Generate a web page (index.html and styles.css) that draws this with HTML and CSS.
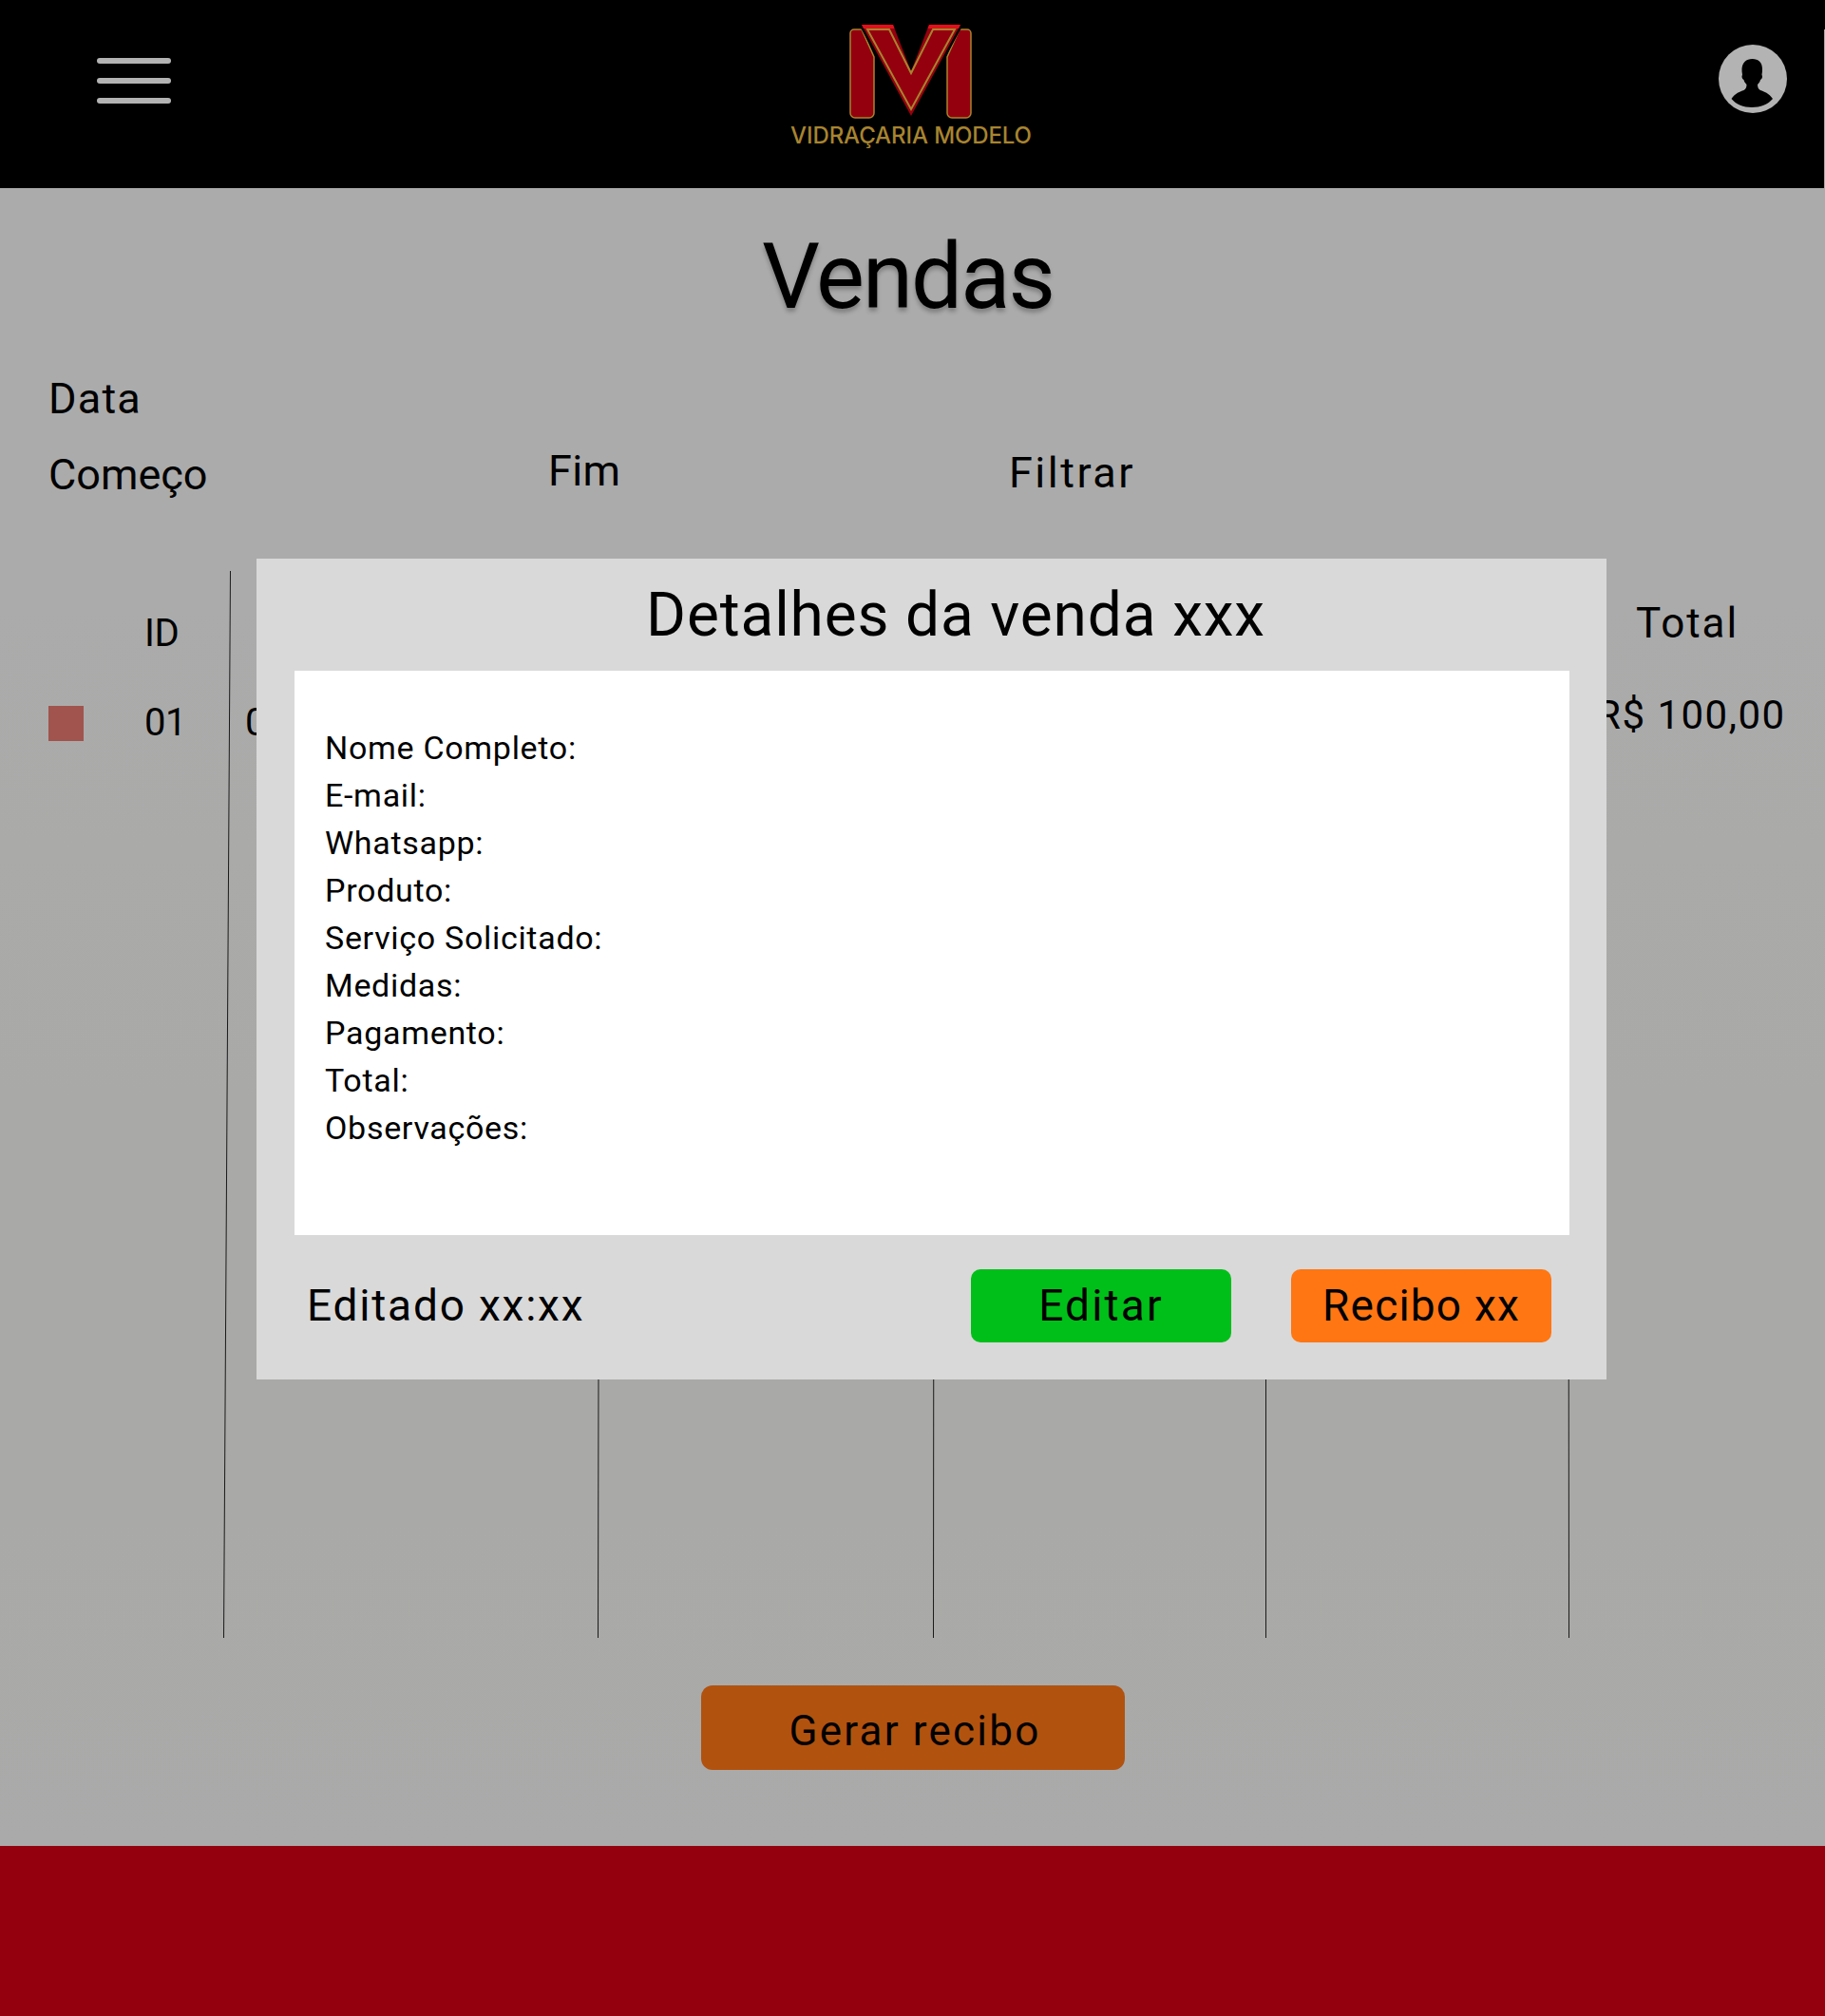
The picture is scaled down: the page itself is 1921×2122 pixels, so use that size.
FILE: index.html
```html
<!DOCTYPE html>
<html lang="pt-BR">
<head>
<meta charset="utf-8">
<title>Vendas</title>
<link rel="stylesheet" href="styles.css">
</head>
<body>
<header class="topbar">
  <button class="menu" aria-label="Menu"><span></span><span></span><span></span></button>
  <div class="logo">
    <svg class="logo-mark" viewBox="0 0 130 100" width="130" height="100" aria-hidden="true">
      <path class="bar" d="M1 9a4 4 0 0 1 4-4h8l13 29v59a5 5 0 0 1-5 5H6a5 5 0 0 1-5-5z"/>
      <path class="bar" d="M128 9a4 4 0 0 0-4-4h-8l-13 29v59a5 5 0 0 0 5 5h15a5 5 0 0 0 5-5z"/>
      <path class="vee" d="M13 0h33l19 49 19-49h33L65 96z"/>
      <path class="vee-top" d="M13 0h33l1.500 4H15zM84 0h33l-2 4H82.500z"/>
      <path class="vee-line" d="M19 5h23l23 46 23-46h23L65 89z"/>
    </svg>
    <span class="logo-name">VIDRAÇARIA MODELO</span>
  </div>
  <svg class="avatar" viewBox="0 0 72 72" width="72" height="72" aria-label="Perfil">
    <circle cx="36" cy="36" r="36" fill="#b3b3b3"/>
    <path fill="#000" d="M35.500 15c6.500 0 10.500 4 10.500 10.500 0 2 0 4-.5 6l.5 2c0 2-1 3-2 3.500-.5 2-1.500 3.500-3 5 0 3 1 5 3 6 4 1.500 9 3 13 9-5 6-13 9-22 9s-16.500-3-21.500-9c4-6 9-7.500 13-9 2-1 3-3 3-6-1.500-1.500-2.500-3-3-5-1-.5-2-1.500-2-3.500l.5-2c-.5-2-.5-4-.5-6C25 19 29 15 35.500 15z"/>
  </svg>
</header>

<main class="content">
  <h1 class="title">Vendas</h1>
  <div class="filters">
    <div class="filter-head">Data</div>
    <div class="filter-row">
      <span class="f-start">Começo</span>
      <span class="f-end">Fim</span>
      <span class="f-go">Filtrar</span>
    </div>
  </div>

  <section class="table">
    <svg class="rules" viewBox="0 0 1921 1123" width="1921" height="1123" aria-hidden="true">
      <path d="M242.500 0L235.500 1123M631.500 0L629.500 1123M983.500 0L982.500 1123M1332.500 0V1123M1650.500 0L1651.500 1123"/>
    </svg>
    <div class="row head">
      <span class="c-id">ID</span>
      <span class="c-total">Total</span>
    </div>
    <div class="row body">
      <i class="swatch"></i>
      <span class="c-id">01</span>
      <span class="c-date">01</span>
      <span class="c-price">R$ 100,00</span>
    </div>
  </section>

  <div class="actions"><button class="receipt">Gerar recibo</button></div>
</main>

<footer class="footer"></footer>

<section class="modal" role="dialog">
  <h2 class="modal-title">Detalhes da venda xxx</h2>
  <div class="modal-card">
    <p>Nome Completo:</p>
    <p>E-mail:</p>
    <p>Whatsapp:</p>
    <p>Produto:</p>
    <p>Serviço Solicitado:</p>
    <p>Medidas:</p>
    <p>Pagamento:</p>
    <p>Total:</p>
    <p>Observações:</p>
  </div>
  <div class="modal-foot">
    <span class="edited">Editado xx:xx</span>
    <button class="btn green">Editar</button>
    <button class="btn orange">Recibo xx</button>
  </div>
</section>
</body>
</html>
```

FILE: styles.css
```css
* { box-sizing: border-box; }
html, body { margin: 0; padding: 0; }
body {
  width: 1921px;
  height: 2122px;
  position: relative;
  overflow: hidden;
  background: #aaaaaa;
  color: #000;
  font-family: Roboto, "Liberation Sans", sans-serif;
}
button { font: inherit; color: inherit; border: 0; padding: 0; }

.topbar {
  position: relative;
  height: 198px;
  background: #000;
  display: grid;
  grid-template-columns: 1fr auto 1fr;
  align-items: start;
}
.topbar::after {
  content: "";
  position: absolute;
  right: 0;
  top: 31px;
  bottom: 0;
  width: 1px;
  background: #ababab;
}
.menu {
  width: 78px;
  margin: 61px 0 0 102px;
  background: none;
  display: flex;
  flex-direction: column;
  gap: 15px;
}
.menu span { height: 6px; border-radius: 3px; background: #b3b3b3; }
.logo {
  display: flex;
  flex-direction: column;
  align-items: center;
  padding: 26px 3px 0 0;
}
.logo-mark { display: block; overflow: visible; }
.bar { fill: #95000f; stroke: #a8842f; stroke-width: 1.500; }
.vee { fill: #95000f; stroke: #000; stroke-width: 5; paint-order: stroke; }
.vee-top { fill: #e0101a; }
.vee-line { fill: none; stroke: #a8842f; stroke-width: 2; }
.logo-name {
  font-family: Inter, sans-serif;
  font-weight: 500;
  font-size: 24px;
  line-height: 28px;
  letter-spacing: -0.1px;
  color: #a8842f;
  margin-top: 3px;
}
.avatar { justify-self: end; margin: 47px 40px 0 0; }

.content {
  height: 1745px;
  padding-top: 35px;
  background: linear-gradient(180deg, #ababab 0%, #ababab 25%, #a9a9a7 55%, #a9a9a7 80%, #aaaaaa 100%);
}
.title {
  margin: 0;
  padding-right: 10px;
  text-align: center;
  font-size: 96px;
  font-weight: 400;
  line-height: 116px;
  letter-spacing: -2px;
  text-shadow: 0 4px 4px rgba(0,0,0,.25);
}
.filters { padding: 41px 0 0 51px; font-size: 45px; line-height: 60px; }
.filter-head { letter-spacing: 1.200px; }
.filter-row { display: flex; align-items: flex-start; margin-top: 20px; }
.f-start { width: 526px; }
.f-end { width: 485px; margin-top: -4px; letter-spacing: .4px; }
.f-go { margin-top: -2px; letter-spacing: 2.500px; }

.table { position: relative; display: flow-root; height: 1123px; margin-top: 71px; font-size: 40px; line-height: 50px; }
.rules { position: absolute; inset: 0; }
.rules path { fill: none; stroke: #1a1a1a; stroke-width: 1; }
.row { position: relative; display: flex; align-items: center; height: 50px; padding-left: 51px; }
.head { margin-top: 41px; }
.body { margin-top: 44px; }
.swatch { width: 37px; height: 37px; background: #a0544d; margin-right: 64px; }
.head .c-id { margin-left: 101px; }
.c-id { width: 106px; letter-spacing: -.5px; }
.c-date { width: 100px; }
.c-total { margin-left: 1464px; margin-top: -22px; font-size: 44px; letter-spacing: 2px; }
.c-price { margin-left: 1322px; margin-top: -17px; font-size: 42px; letter-spacing: 1.500px; }

.actions { display: flex; justify-content: center; padding-top: 50px; }
.receipt {
  width: 446px;
  height: 89px;
  padding: 6px 0 0 5px;
  border-radius: 12px;
  background: #b1520f;
  font-size: 44px;
  letter-spacing: 2.200px;
}
.footer { height: 179px; background: #95000f; }

.modal {
  position: absolute;
  left: 270px;
  top: 588px;
  width: 1421px;
  height: 864px;
  background: #d9d9d9;
  padding: 0 39px 0 40px;
}
.modal-title {
  margin: 0;
  height: 118px;
  padding-left: 50px;
  text-align: center;
  font-size: 64px;
  font-weight: 400;
  line-height: 120px;
  letter-spacing: .85px;
}
.modal-card {
  height: 594px;
  background: #fff;
  padding: 56px 32px;
  font-size: 34px;
  line-height: 50px;
  letter-spacing: .7px;
}
.modal-card p { margin: 0; }
.modal-foot {
  display: flex;
  align-items: flex-start;
  padding: 36px 19px 0 13px;
  font-size: 46px;
  line-height: 77px;
}
.edited { flex: 1; letter-spacing: 1.800px; }
.btn { width: 274px; height: 77px; border-radius: 10px; letter-spacing: 1.200px; }
.green { background: #00bf19; margin-right: 63px; letter-spacing: 2.200px; }
.orange { background: #ff7613; }
```
